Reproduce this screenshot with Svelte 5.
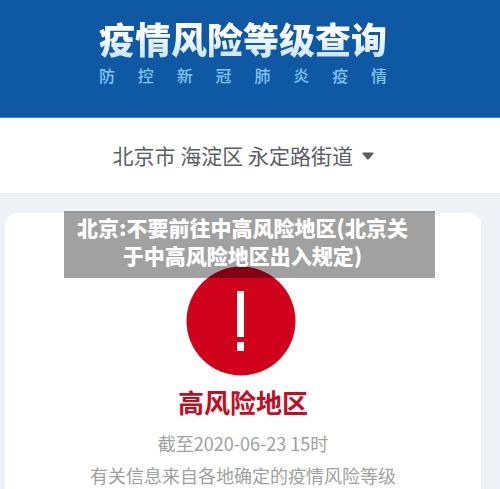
<script>
  let area = $state('北京市 海淀区 永定路街道');
  const areas = ['北京市 海淀区 永定路街道'];
</script>

<div class="page">
  <header>
    <div class="brand">
      <h1>疫情风险等级查询</h1>
      <p>防控新冠肺炎疫情</p>
    </div>
  </header>

  <div class="location">
    <label>
      <select bind:value={area} aria-label="选择地区">
        {#each areas as name}
          <option value={name}>{name}</option>
        {/each}
      </select>
      <svg width="12" height="8" viewBox="0 0 12 8" aria-hidden="true">
        <path d="M1 .5h10q1 .3.4 1.2L6.8 7.2q-.8.8-1.6 0L.6 1.7Q0 .8 1 .5z" fill="#5b5d63" />
      </svg>
    </label>
  </div>

  <main>
    <section class="card">
      <svg class="alert" width="110" height="110" viewBox="0 0 110 110" aria-hidden="true">
        <circle cx="55" cy="55" r="54.5" fill="#d0021b" />
        <path d="M51 25h7v46h-7zM51 76h7v9h-7z" fill="#fff" />
      </svg>
      <h2>高风险地区</h2>
      <p>截至2020-06-23 15时</p>
      <p>有关信息来自各地确定的疫情风险等级</p>
    </section>
  </main>

  <div class="caption">北京:不要前往中高风险地区(北京关<br />于中高风险地区出入规定)</div>
</div>

<style>
  :global(body) {
    margin: 0;
    background: #eef2f7;
  }
  .page {
    position: relative;
    min-height: 100vh;
    display: flex;
    flex-direction: column;
    overflow: hidden;
    box-sizing: border-box;
    font-family: "Noto Sans CJK SC", sans-serif;
  }
  h1, h2, p {
    margin: 0;
  }
  header {
    display: flex;
    justify-content: center;
    padding: 16px 30px 30px 16px;
    background: #0f59a4;
    border-bottom: 1px solid #4a83bb;
  }
  h1 {
    font-size: 36px;
    line-height: 44px;
    font-weight: 900;
    background: linear-gradient(#fff 35%, #cfe6ff 90%);
    background-clip: text;
    color: transparent;
  }
  header p {
    font-size: 16px;
    line-height: 24px;
    padding-top: 3px;
    font-weight: 500;
    color: #82c4f2;
    text-align: justify;
    text-align-last: justify;
  }
  .location {
    display: flex;
    justify-content: center;
    padding: 22px 30px 22px 16px;
    background: #fff;
    border-bottom: 1px solid #e9edf0;
  }
  label {
    display: flex;
    align-items: center;
    gap: 8px;
  }
  select {
    appearance: none;
    border: 0;
    padding: 0;
    background: none;
    font: 21px/31px "Noto Sans CJK SC", sans-serif;
    color: #5b5d63;
  }
  main {
    flex: 1;
    display: flex;
    padding: 19px 19px 0 5px;
  }
  .card {
    flex: 1;
    display: flex;
    flex-direction: column;
    align-items: center;
    padding-top: 53px;
    border-radius: 12px 12px 0 0;
    background: #fff;
  }
  .alert {
    margin-right: 5px;
  }
  h2 {
    margin: 7px 0 6px;
    font-size: 26px;
    line-height: 38px;
    font-weight: 700;
    color: #c40d23;
  }
  .card p {
    font-size: 18px;
    line-height: 32px;
    color: #a0a19e;
  }
  .caption {
    position: absolute;
    top: 211px;
    left: 64px;
    right: 65px;
    padding: 2px 14px 9px 0;
    background: rgba(0, 0, 0, 0.37);
    color: #fff;
    font-size: 21px;
    line-height: 28px;
    font-weight: 900;
    text-align: center;
    white-space: nowrap;
  }
</style>
